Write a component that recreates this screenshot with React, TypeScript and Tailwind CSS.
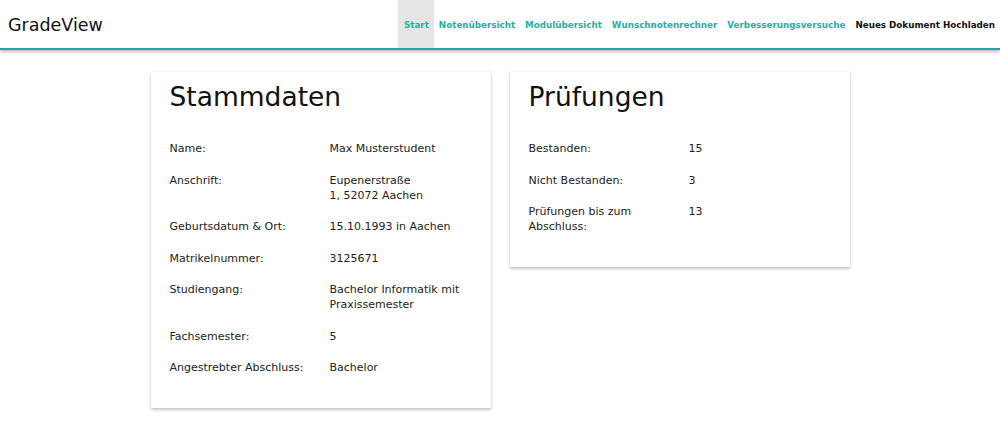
import React from "react";

const NAV = [
  { label: "Start", active: true },
  { label: "Notenübersicht" },
  { label: "Modulübersicht" },
  { label: "Wunschnotenrechner" },
  { label: "Verbesserungsversuche" },
  { label: "Neues Dokument Hochladen", dark: true },
];

type Row = { label: string; value: React.ReactNode };

const STAMMDATEN: Row[] = [
  { label: "Name:", value: "Max Musterstudent" },
  {
    label: "Anschrift:",
    value: (
      <>
        Eupenerstraße
        <br />
        1, 52072 Aachen
      </>
    ),
  },
  { label: "Geburtsdatum & Ort:", value: "15.10.1993 in Aachen" },
  { label: "Matrikelnummer:", value: "3125671" },
  { label: "Studiengang:", value: "Bachelor Informatik mit Praxissemester" },
  { label: "Fachsemester:", value: "5" },
  { label: "Angestrebter Abschluss:", value: "Bachelor" },
];

const PRUEFUNGEN: Row[] = [
  { label: "Bestanden:", value: "15" },
  { label: "Nicht Bestanden:", value: "3" },
  { label: "Prüfungen bis zum Abschluss:", value: "13" },
];

function Card({ title, rows }: { title: string; rows: Row[] }) {
  return (
    <section className="w-[340px] bg-white px-[19px] pt-[7px] pb-[16px] shadow-[0_2px_3px_rgba(0,0,0,0.22),0_0_2px_rgba(0,0,0,0.08)]">
      <h2 className="text-[26.5px] leading-[36px] text-[#111] mb-[26px]">{title}</h2>
      <div className="flex flex-col">
        {rows.map((r) => (
          <div key={r.label} className="flex mb-[16.5px] text-[11px] leading-[15px] text-[#222]">
            <div className="w-[140px] mr-[20px]">{r.label}</div>
            <div className="w-[140px]">{r.value}</div>
          </div>
        ))}
      </div>
    </section>
  );
}

export default function App() {
  return (
    <div className="min-h-[429px] bg-white" style={{ fontFamily: '"DejaVu Sans", Verdana, sans-serif' }}>
      {/* ── Header ── */}
      <header className="flex items-stretch justify-between h-[50px] border-b-2 border-[#26a69a] shadow-[0_2px_3px_rgba(0,0,0,0.25)] pl-[8px]">
        <div className="flex items-center pt-[3px] text-[17.5px] text-[#111]">GradeView</div>
        <nav className="flex items-stretch">
          {NAV.map((n) => (
            <a
              key={n.label}
              href="#"
              className={`flex items-center pt-[3px] px-[5px] text-[8.75px] font-bold ${
                n.active ? "bg-[#e5e5e5] pl-[6px] pr-[5px]" : ""
              } ${n.dark ? "text-[#111]" : "text-[#1fb0a3]"}`}
            >
              {n.label}
            </a>
          ))}
        </nav>
      </header>

      {/* ── Content ── */}
      <main className="flex justify-center items-start gap-[19px] pt-[22px] pb-[20px]">
        <Card title="Stammdaten" rows={STAMMDATEN} />
        <Card title="Prüfungen" rows={PRUEFUNGEN} />
      </main>
    </div>
  );
}
